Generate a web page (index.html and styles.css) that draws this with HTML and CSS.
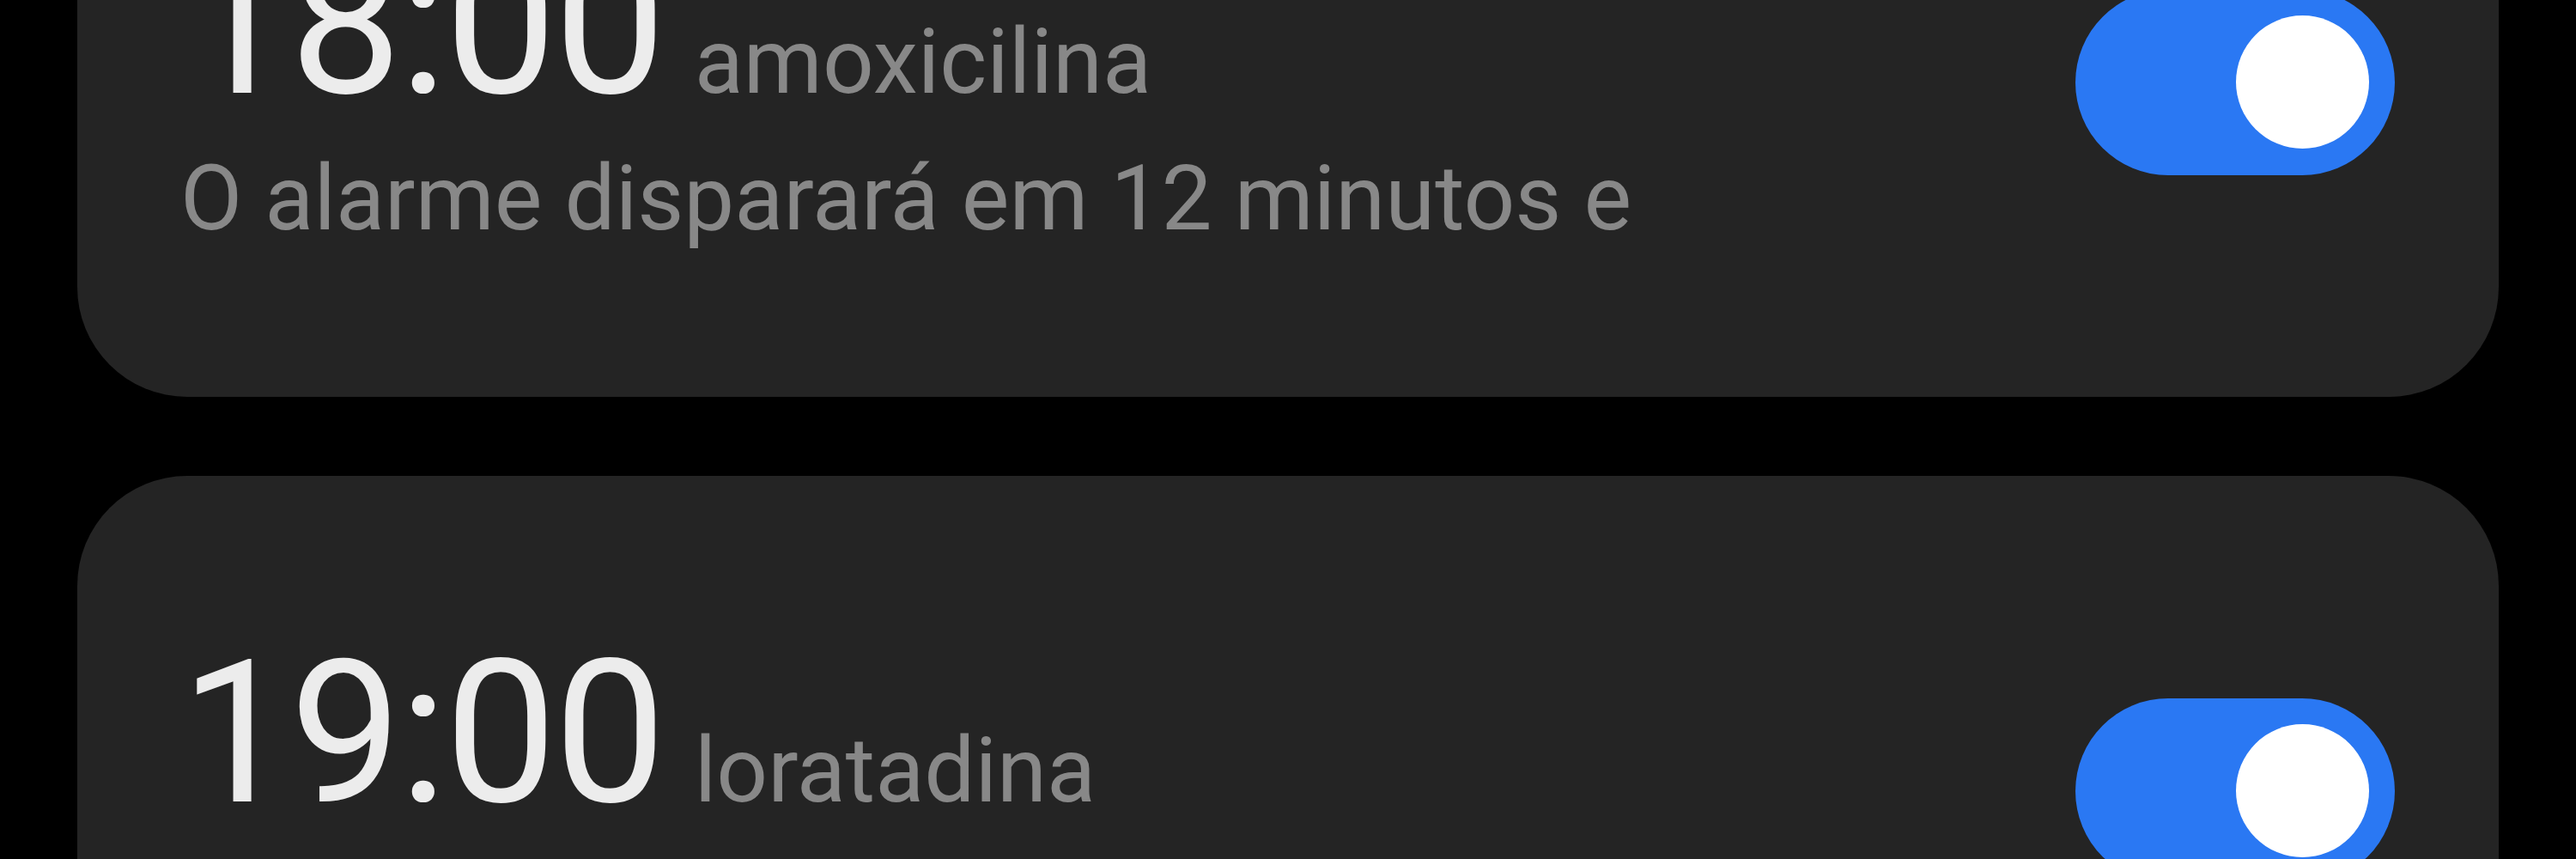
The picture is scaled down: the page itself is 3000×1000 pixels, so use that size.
FILE: index.html
```html
<!DOCTYPE html>
<html lang="pt">
<head>
<meta charset="utf-8">
<title>Alarmes</title>
<link rel="stylesheet" href="styles.css">
</head>
<body>
<main class="list">
  <section class="card">
    <div class="info">
      <div class="row"><span class="time">18:00</span><span class="name">amoxicilina</span></div>
      <div class="sub">O alarme disparará em 12 minutos e</div>
    </div>
    <div class="toggle"><div class="knob"></div></div>
  </section>
  <section class="card">
    <div class="info">
      <div class="row"><span class="time">19:00</span><span class="name">loratadina</span></div>
      <div class="sub">&nbsp;</div>
    </div>
    <div class="toggle"><div class="knob"></div></div>
  </section>
</main>
</body>
</html>
```

FILE: styles.css
```css
html, body {
  margin: 0;
  padding: 0;
  background: #000;
  overflow: hidden;
}
body {
  font-family: Roboto, "Noto Sans", "Liberation Sans", sans-serif;
}
.list {
  display: flex;
  flex-direction: column;
  gap: 92px;
  padding: 0 90px;
  margin-top: -271px;
}
.card {
  height: 733px;
  box-sizing: border-box;
  background: #242424;
  border-radius: 128px;
  display: flex;
  align-items: center;
  justify-content: space-between;
  padding: 0 121px 0 120px;
}
.info {
  padding-top: 32px;
}
.row {
  font-size: 232px;
  line-height: 240px;
  white-space: nowrap;
}
.time {
  color: #ececec;
  font-weight: 400;
  letter-spacing: -3px;
}
.name {
  font-size: 105px;
  line-height: 1;
  color: #888888;
  margin-left: 36px;
}
.sub {
  font-size: 105px;
  line-height: 165px;
  color: #888888;
  white-space: nowrap;
}
.toggle {
  width: 372px;
  height: 216px;
  border-radius: 108px;
  background: #2a78f3;
  display: flex;
  align-items: center;
  justify-content: flex-end;
  padding: 0 30px;
  box-sizing: border-box;
  flex: none;
}
.knob {
  width: 155px;
  height: 155px;
  border-radius: 50%;
  background: #ffffff;
}
```
